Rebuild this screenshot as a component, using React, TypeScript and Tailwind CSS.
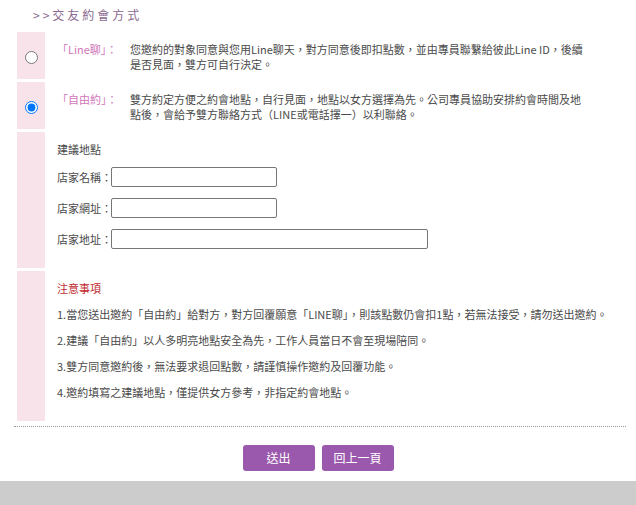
import React from "react";

const font = { fontFamily: '"Noto Sans CJK TC", "Noto Sans", sans-serif' };

export default function App() {
  return (
    <div
      className="w-[636px] h-[505px] bg-white flex flex-col overflow-hidden text-[11px] text-[#4a4a4a]"
      style={font}
    >
      <div className="h-[32px] pt-[6px] pl-[33px] text-[12px] leading-[17px] tracking-[3px] text-[#8a6a90]">
        &gt;&gt;交友約會方式
      </div>

      <div className="ml-[17px] flex flex-col gap-[3px]">
        {/* Row 1 */}
        <div className="flex h-[47px]">
          <div className="w-[28px] bg-[#f9e3ea] flex items-center justify-center pt-[3px]">
            <input type="radio" name="way" className="m-0 w-[13px] h-[13px]" />
          </div>
          <div className="flex pl-[12px] pt-[10px] leading-[15px]">
            <div className="w-[73px] text-[#d077b9] whitespace-nowrap">「Line聊」：</div>
            <div className="whitespace-nowrap">
              您邀約的對象同意與您用Line聊天，對方同意後即扣點數，並由專員聯繫給彼此Line ID，後續
              <br />
              是否見面，雙方可自行決定。
            </div>
          </div>
        </div>

        {/* Row 2 */}
        <div className="flex h-[47px]">
          <div className="w-[28px] bg-[#f9e3ea] flex items-center justify-center pt-[3px]">
            <input type="radio" name="way" defaultChecked className="m-0 w-[13px] h-[13px]" />
          </div>
          <div className="flex pl-[12px] pt-[10px] leading-[15px]">
            <div className="w-[73px] text-[#d077b9] whitespace-nowrap">「自由約」：</div>
            <div className="whitespace-nowrap">
              雙方約定方便之約會地點，自行見面，地點以女方選擇為先。公司專員協助安排約會時間及地
              <br />
              點後，會給予雙方聯絡方式（LINE或電話擇一）以利聯絡。
            </div>
          </div>
        </div>

        {/* Row 3 */}
        <div className="flex h-[136px]">
          <div className="w-[28px] bg-[#f9e3ea]" />
          <div className="flex flex-col pl-[12px] pt-[10px]">
            <div className="leading-[15px] h-[15px]">建議地點</div>
            <div className="flex flex-col gap-[11px] mt-[10px]">
              <div className="flex items-center h-[20px]">
                <span className="w-[54px] whitespace-nowrap">店家名稱：</span>
                <input type="text" className="w-[166px] h-[20px] border border-[#767676] rounded-[2px] bg-white" />
              </div>
              <div className="flex items-center h-[20px]">
                <span className="w-[54px] whitespace-nowrap">店家網址：</span>
                <input type="text" className="w-[166px] h-[20px] border border-[#767676] rounded-[2px] bg-white" />
              </div>
              <div className="flex items-center h-[20px]">
                <span className="w-[54px] whitespace-nowrap">店家地址：</span>
                <input type="text" className="w-[317px] h-[20px] border border-[#767676] rounded-[2px] bg-white" />
              </div>
            </div>
          </div>
        </div>

        {/* Row 4 */}
        <div className="flex h-[150px]">
          <div className="w-[28px] bg-[#f9e3ea]" />
          <div className="flex flex-col pl-[12px] pt-[4px] leading-[26px] whitespace-nowrap">
            <div className="text-[#c0282d]">注意事項</div>
            <div>1.當您送出邀約「自由約」給對方，對方回覆願意「LINE聊」，則該點數仍會扣1點，若無法接受，請勿送出邀約。</div>
            <div>2.建議「自由約」以人多明亮地點安全為先，工作人員當日不會至現場陪同。</div>
            <div>3.雙方同意邀約後，無法要求退回點數，請謹慎操作邀約及回覆功能。</div>
            <div>4.邀約填寫之建議地點，僅提供女方參考，非指定約會地點。</div>
          </div>
        </div>
      </div>

      <div className="mt-[5px] ml-[14px] mr-[10px] border-t border-dotted border-[#999]" />

      <div className="mt-[18px] flex justify-center gap-[7px]">
        <button className="w-[72px] h-[26px] rounded-[3px] bg-[#9b59ad] text-white text-[12px]">送出</button>
        <button className="w-[72px] h-[26px] rounded-[3px] bg-[#9b59ad] text-white text-[12px]">回上一頁</button>
      </div>

      <div className="mt-auto h-[24px] bg-[#cccccc]" />
    </div>
  );
}
